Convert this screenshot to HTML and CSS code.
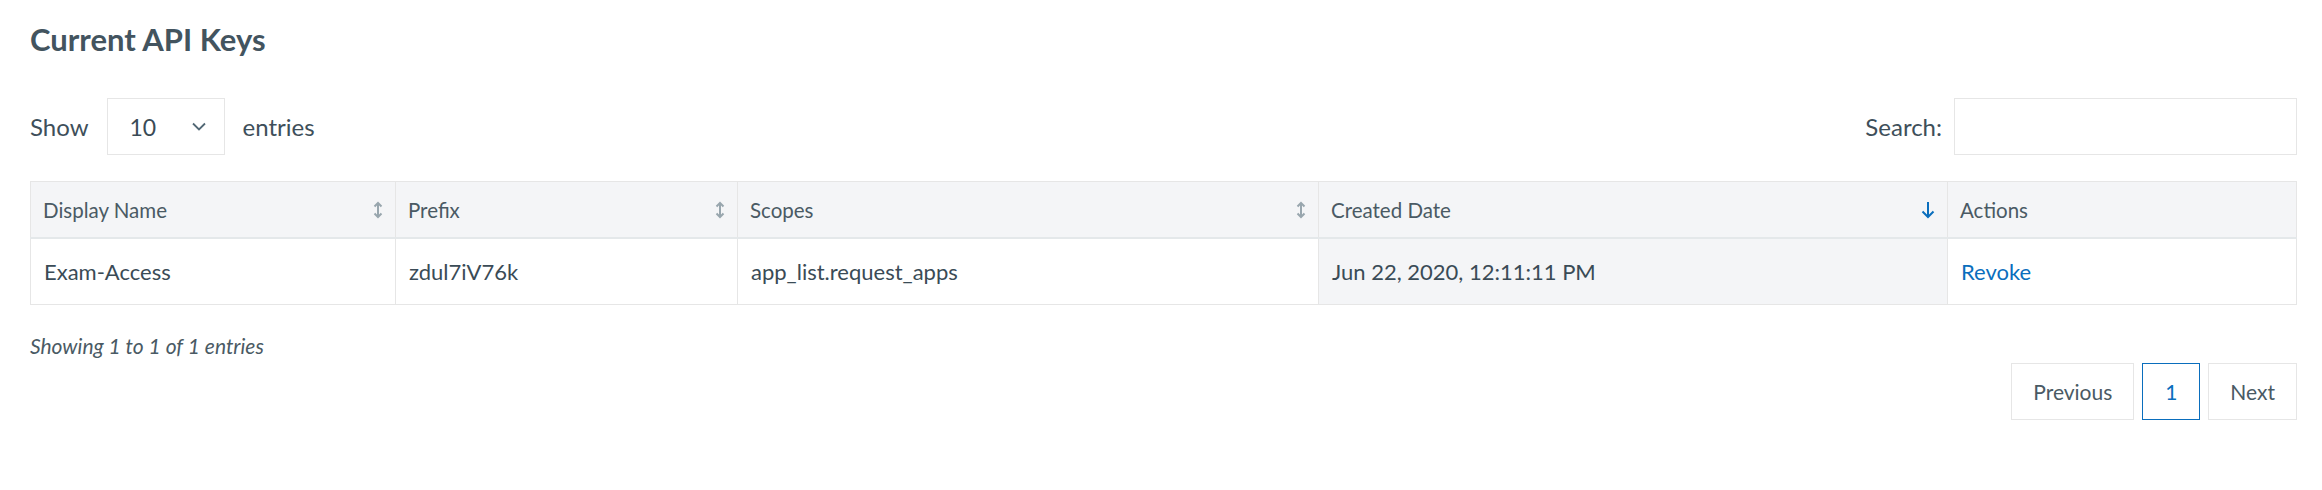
FILE: index.html
```html
<!DOCTYPE html>
<html>
    <head>
        <title>Current API Keys</title>
        <link rel="stylesheet" href="styles.css">
    </head>
    <body>
        <div class="page">
            <h2 class="title">Current API Keys</h2>
            <div class="controls">
                <label class="length">
                    Show
                    <span class="select">
                        <span class="select-value">10</span>
                        <svg class="chevron" width="14" height="9" viewBox="0 0 14 9"><path d="M1 1.5 L7 7.5 L13 1.5" fill="none" stroke="#526875" stroke-width="1.8"/></svg>
                    </span>
                    entries
                </label>
                <label class="search">
                    Search:
                    <span class="search-box"></span>
                </label>
            </div>
            <table class="keys">
                <thead>
                    <tr>
                        <th class="col-name"><span class="th-inner">Display Name <svg class="sort" width="10" height="18" viewBox="0 0 10 18"><path d="M5 2 V16 M1.5 5.5 L5 2 L8.5 5.5 M1.5 12.5 L5 16 L8.5 12.5" fill="none" stroke="#98a6ae" stroke-width="2"/></svg></span></th>
                        <th class="col-prefix"><span class="th-inner">Prefix <svg class="sort" width="10" height="18" viewBox="0 0 10 18"><path d="M5 2 V16 M1.5 5.5 L5 2 L8.5 5.5 M1.5 12.5 L5 16 L8.5 12.5" fill="none" stroke="#98a6ae" stroke-width="2"/></svg></span></th>
                        <th class="col-scopes"><span class="th-inner">Scopes <svg class="sort" width="10" height="18" viewBox="0 0 10 18"><path d="M5 2 V16 M1.5 5.5 L5 2 L8.5 5.5 M1.5 12.5 L5 16 L8.5 12.5" fill="none" stroke="#98a6ae" stroke-width="2"/></svg></span></th>
                        <th class="col-date"><span class="th-inner">Created Date <svg class="sort" width="14" height="18" viewBox="0 0 14 18"><path d="M7 1 V16 M1.5 10.5 L7 16 L12.5 10.5" fill="none" stroke="#0a6ebd" stroke-width="2"/></svg></span></th>
                        <th class="col-actions">Actions</th>
                    </tr>
                </thead>
                <tbody>
                    <tr>
                        <td>Exam-Access</td>
                        <td>zdul7iV76k</td>
                        <td>app_list.request_apps</td>
                        <td class="sorted">Jun 22, 2020, 12:11:11 PM</td>
                        <td><a class="revoke" href="#">Revoke</a></td>
                    </tr>
                </tbody>
            </table>
            <div class="footer">
                <div class="info">Showing 1 to 1 of 1 entries</div>
                <div class="paginate">
                    <a class="page-btn" href="#">Previous</a>
                    <a class="page-btn current" href="#">1</a>
                    <a class="page-btn" href="#">Next</a>
                </div>
            </div>
        </div>
    </body>
</html>
```

FILE: styles.css
```css
body {
    margin: 0;
    font-family: Lato, "Liberation Sans", sans-serif;
    font-size: 24px;
    color: #3e4f5a;
    background-color: #ffffff;
}

.page {
    padding: 0 25px 0 30px;
}

h2.title {
    margin: 0;
    padding-top: 22px;
    font-size: 31px;
    font-weight: bold;
    line-height: 34px;
    color: #43545f;
}

.controls {
    display: flex;
    justify-content: space-between;
    align-items: center;
    margin-top: 42px;
}

.length, .search {
    display: flex;
    align-items: center;
    gap: 18px;
}

.select {
    display: flex;
    align-items: center;
    justify-content: space-between;
    box-sizing: border-box;
    width: 118px;
    height: 57px;
    padding: 0 18px 0 22px;
    border: 1px solid #e6e6e6;
    color: #3a4b56;
    font-size: 23px;
}

.search {
    gap: 12px;
}

.search-box {
    display: block;
    box-sizing: border-box;
    width: 343px;
    height: 57px;
    border: 1px solid #e6e6e6;
}

table.keys {
    width: 100%;
    margin-top: 26px;
    border-collapse: collapse;
    border: 1px solid #e6e6e6;
}

table.keys th {
    height: 55px;
    padding: 0 12px;
    text-align: left;
    font-weight: normal;
    font-size: 20.5px;
    color: #4a5a64;
    background-color: #f4f5f7;
    border: 1px solid #e6e6e6;
    border-bottom: 2px solid #e4e8ea;
}

.th-inner {
    display: flex;
    align-items: center;
    justify-content: space-between;
}

svg.sort {
    display: block;
}

table.keys td {
    height: 65px;
    padding: 0 13px;
    border: 1px solid #e6e6e6;
    color: #3a4b56;
    font-size: 22px;
}

table.keys td.sorted {
    background-color: #f4f5f7;
}

.col-name { width: 340px; }
.col-prefix { width: 317px; }
.col-scopes { width: 556px; }
.col-date { width: 604px; }

a.revoke {
    color: #0a6ebd;
    text-decoration: none;
}

.footer {
    display: flex;
    justify-content: space-between;
    align-items: flex-start;
    margin-top: 28px;
}

.info {
    font-size: 21px;
    font-style: italic;
    color: #4a5a64;
}

.paginate {
    display: flex;
    gap: 8px;
    margin-top: 30px;
}

.page-btn {
    display: flex;
    align-items: center;
    justify-content: center;
    box-sizing: border-box;
    height: 57px;
    padding: 0 21px;
    border: 1px solid #e6e6e6;
    color: #4a5a64;
    font-size: 21px;
    text-decoration: none;
}

.page-btn.current {
    width: 58px;
    padding: 0;
    border-color: #0a6ebd;
    color: #0a6ebd;
}
```
